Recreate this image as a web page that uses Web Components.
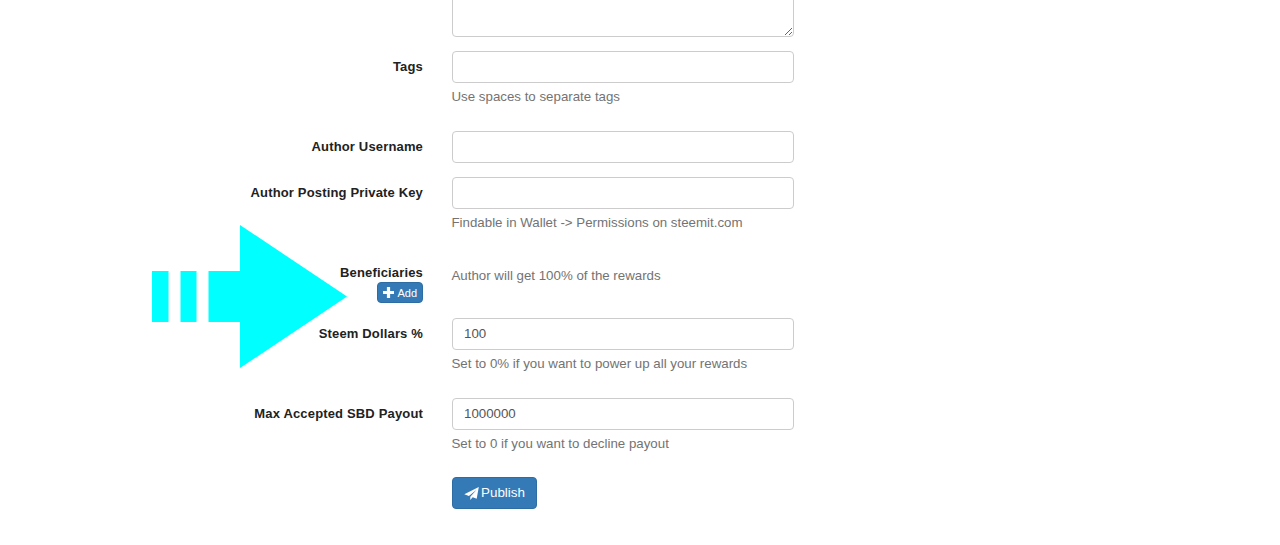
<!DOCTYPE html>
<html>
<head>
<meta charset="utf-8">
<title>Publish</title>
<style>
  html, body { margin: 0; height: 545px; overflow: hidden; background: #fff; }
  body { font: 13.3px/20px "Liberation Sans", Arial, sans-serif; color: #333; }
</style>
</head>
<body>
<template id="row-tpl">
  <style>
    :host { display: grid; grid-template-columns: 423px 342px; column-gap: 29px; margin-bottom: var(--gap, 14px); }
    .label { text-align: right; font-weight: bold; font-size: 13px; letter-spacing: .16px; color: #222; padding-top: 6px; line-height: 20px; }
    .help { color: #737373; font-size: 13.3px; line-height: 20px; margin: 4px 0 0 -.5px; }
    .help:empty { display: none; }
  </style>
  <div class="label"><span id="lbl"></span><slot name="extra"></slot></div>
  <div><slot></slot><div class="help" id="help"></div></div>
</template>

<template id="input-tpl">
  <style>
    :host { display: block; }
    input, textarea { display: block; box-sizing: border-box; width: 342px; height: 32px; margin: 0; padding: 0 11px 2px; border: 1.5px solid #ccc; border-radius: 4px; background: #fff; color: #555; font: 13.3px "Liberation Sans", Arial, sans-serif; outline: 0; }
    textarea { height: var(--h, 60px); resize: vertical; padding: 6px 11px; }
  </style>
</template>

<template id="btn-tpl">
  <style>
    :host { display: inline-flex; align-items: center; box-sizing: border-box; background: #337ab7; color: #fff; border: 1px solid #2e6da4; border-radius: 4px; font-family: "Liberation Sans", Arial, sans-serif; font-weight: normal; letter-spacing: 0; }
    :host([size=xs]) { height: 21px; padding: 0 5px 0 4.500px; font-size: 11px; line-height: 18px; gap: 3.500px; margin: -1px 0 1px auto; }
    :host(:not([size=xs])) { height: 32px; padding: 0 11.500px 0 11px; font-size: 13.4px; gap: 2px; }
  </style>
  <slot name="icon"></slot><slot></slot>
</template>

<script>
class FormRow extends HTMLElement {
  constructor() {
    super();
    const shadow = this.attachShadow({mode: 'open'});
    shadow.appendChild(document.getElementById('row-tpl').content.cloneNode(true));
  }
  connectedCallback() {
    this.shadowRoot.getElementById('lbl').textContent = this.getAttribute('label') || '';
    this.shadowRoot.getElementById('help').textContent = this.getAttribute('help') || '';
  }
}
class FormInput extends HTMLElement {
  constructor() {
    super();
    const shadow = this.attachShadow({mode: 'open'});
    shadow.appendChild(document.getElementById('input-tpl').content.cloneNode(true));
  }
  connectedCallback() {
    const el = document.createElement(this.hasAttribute('multiline') ? 'textarea' : 'input');
    if (this.hasAttribute('value')) el.setAttribute('value', this.getAttribute('value'));
    this.shadowRoot.appendChild(el);
  }
}
class BlueButton extends HTMLElement {
  constructor() {
    super();
    const shadow = this.attachShadow({mode: 'open'});
    shadow.appendChild(document.getElementById('btn-tpl').content.cloneNode(true));
  }
}
class PublishForm extends HTMLElement {
  constructor() {
    super();
    this.attachShadow({mode: 'open'}).innerHTML = `
      <style>
        :host { display: block; margin-top: -23px; position: relative; width: 1280px; }
        .arrow { position: absolute; left: 152px; top: 248px; }
      </style>
      <slot></slot>
      <svg class="arrow" width="195" height="143" viewBox="0 0 195 143">
        <path fill="#00ffff" d="M0 46h16.500v51H0zM28.500 46H44.500v51H28.500zM56.500 46H88V0L195 71.500 88 143V97H56.500z"/>
      </svg>`;
  }
}
customElements.define('form-row', FormRow);
customElements.define('form-input', FormInput);
customElements.define('blue-button', BlueButton);
customElements.define('publish-form', PublishForm);
</script>

<publish-form>
  <form-row style="--gap:14px"><form-input multiline style="--h:60px"></form-input></form-row>
  <form-row label="Tags" help="Use spaces to separate tags" style="--gap:24px"><form-input></form-input></form-row>
  <form-row label="Author Username"><form-input></form-input></form-row>
  <form-row label="Author Posting Private Key" help="Findable in Wallet -&gt; Permissions on steemit.com" style="--gap:24px"><form-input></form-input></form-row>
  <form-row label="Beneficiaries" style="--gap:14px">
    <blue-button slot="extra" size="xs" style="display:flex;width:max-content">
      <svg slot="icon" width="11" height="11" viewBox="0 0 11 11" fill="#fff" style="display:block"><path d="M3.900 0h3.200v3.900H11v3.200H7.100V11H3.900V7.100H0V3.900h3.900z"/></svg>Add
    </blue-button>
    <div style="color:#737373;padding-top:8.500px;margin-left:-.5px;line-height:20px">Author will get 100% of the rewards</div>
  </form-row>
  <form-row label="Steem Dollars %" help="Set to 0% if you want to power up all your rewards" style="--gap:24px"><form-input value="100"></form-input></form-row>
  <form-row label="Max Accepted SBD Payout" help="Set to 0 if you want to decline payout" style="--gap:23px"><form-input value="1000000"></form-input></form-row>
  <form-row>
    <div><blue-button>
      <svg slot="icon" width="15" height="15" viewBox="0 0 15 15" fill="#fff" style="display:block"><path d="M14.800 1 12.700 12.700 8.700 11.200 6.300 14V10.800L12.600 3.800 4.900 9.900 .3 8.200z"/></svg>Publish
    </blue-button></div>
  </form-row>
</publish-form>
</body>
</html>
